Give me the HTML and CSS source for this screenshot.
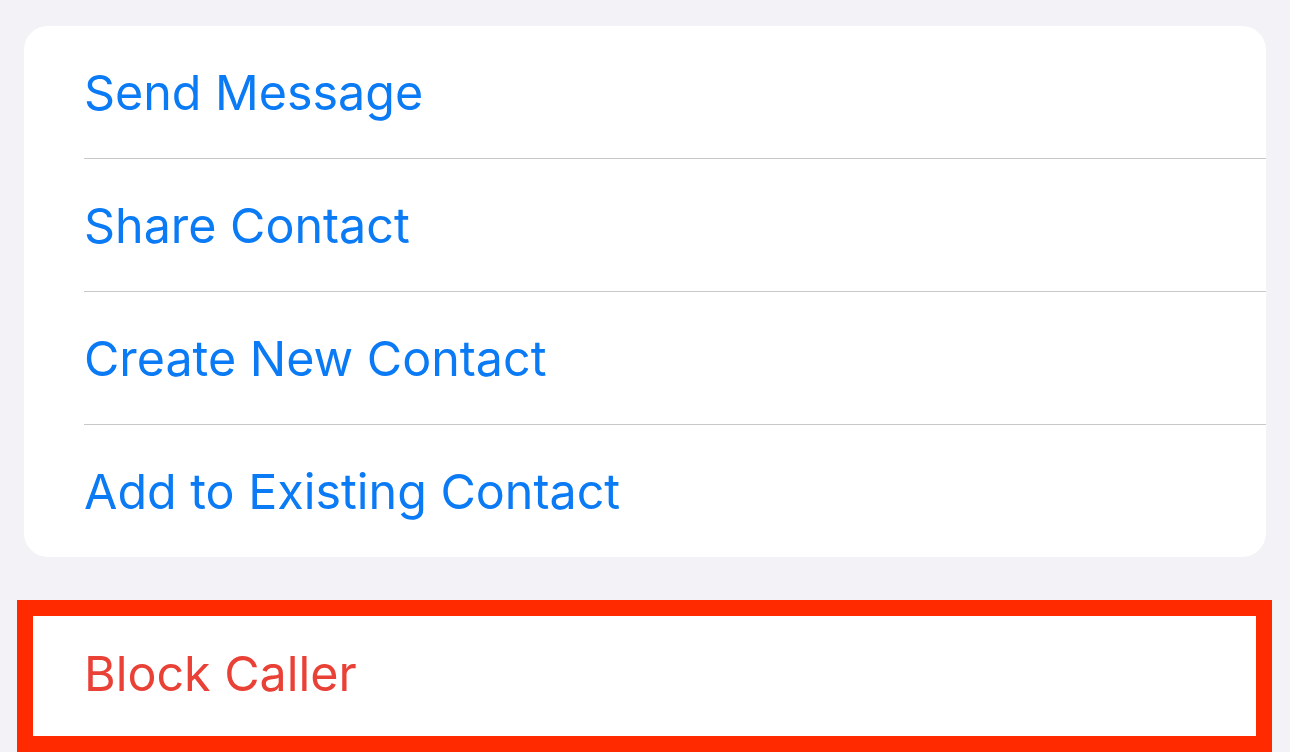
FILE: index.html
```html
<!DOCTYPE html>
<html lang="en">
<head>
    <meta charset="UTF-8">
    <meta name="viewport" content="width=device-width, initial-scale=1.0">
    <title>Contact Actions</title>
    <link rel="stylesheet" href="styles.css">
</head>
<body>
<div class="container">
    <div class="card">
        <div class="row">Send Message</div>
        <div class="row">Share Contact</div>
        <div class="row">Create New Contact</div>
        <div class="row">Add to Existing Contact</div>
    </div>

    <div class="card card-danger">
        <div class="row danger">Block Caller</div>
        <div class="highlight"></div>
    </div>
</div>
</body>
</html>
```

FILE: styles.css
```css
:root {
    --primary-color: #0A7AF5;
    --danger-color: #EA4137;
    --background-color: #F2F2F7;
    --separator-color: #C8C8CA;
    --highlight-color: #FF2A00;
    --border-radius: 24px;
}

body {
    font-family: Inter, "Noto Sans", sans-serif;
    background-color: var(--background-color);
    margin: 0;
    height: 752px;
    overflow: hidden;
}

.container {
    padding: 26px 24px 0;
}

.card {
    background: white;
    border-radius: var(--border-radius);
    overflow: hidden;
}

.card-danger {
    position: relative;
    overflow: visible;
    margin-top: 50px;
    padding-bottom: 13px;
    border-radius: var(--border-radius) var(--border-radius) 0 0;
}

.row {
    height: 132px;
    display: flex;
    align-items: center;
    padding-left: 60px;
    font-size: 48.4px;
    color: var(--primary-color);
}

.row + .row {
    border-top: 1px solid var(--separator-color);
    margin-left: 60px;
    padding-left: 0;
}

.row.danger {
    color: var(--danger-color);
}

.highlight {
    position: absolute;
    left: -7px;
    right: -6px;
    top: -7px;
    bottom: 0;
    border: 16px solid var(--highlight-color);
}
```
